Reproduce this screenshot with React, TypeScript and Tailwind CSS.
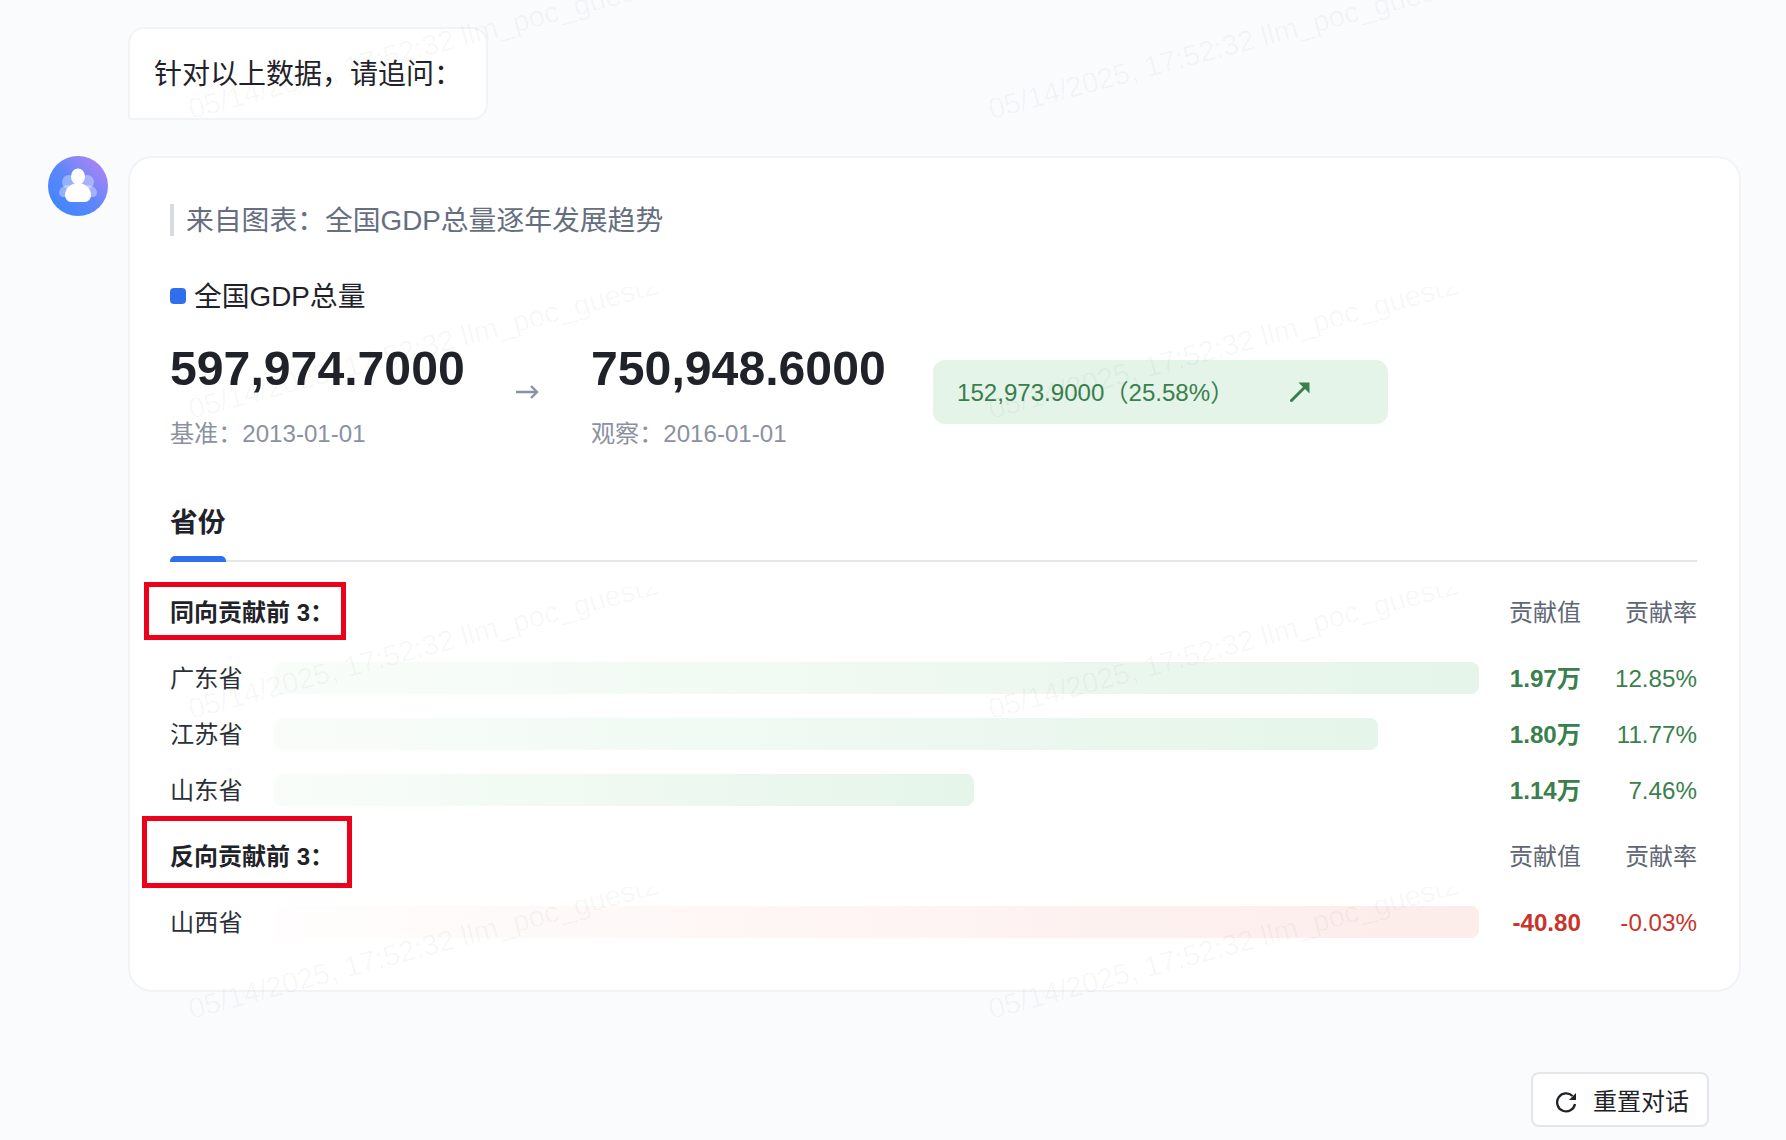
const font = "font-['Liberation_Sans','Noto_Sans_CJK_SC',sans-serif]";

const watermarkTiles = Array.from({ length: 12 }, (_, i) => i);

interface RowData {
  name: string;
  barWidth: string;
  value: string;
  rate: string;
}

const positive: RowData[] = [
  { name: '广东省', barWidth: 'w-full', value: '1.97万', rate: '12.85%' },
  { name: '江苏省', barWidth: 'w-[91.6%]', value: '1.80万', rate: '11.77%' },
  { name: '山东省', barWidth: 'w-[58.1%]', value: '1.14万', rate: '7.46%' },
];

const negative: RowData[] = [{ name: '山西省', barWidth: 'w-full', value: '-40.80', rate: '-0.03%' }];

function Watermark() {
  return (
    <div className="pointer-events-none absolute -left-[140px] -top-[13px] z-10 grid w-[2400px] grid-cols-3">
      {watermarkTiles.map((i) => (
        <div key={i} className="relative h-[300px] w-[800px] overflow-hidden">
          <span className="absolute left-[333px] top-[106px] origin-bottom-left -rotate-[15deg] whitespace-nowrap text-[29px] leading-[32px] text-black/[0.035]">
            05/14/2025, 17:52:32 llm_poc_guest2000
          </span>
        </div>
      ))}
    </div>
  );
}

function Avatar() {
  return (
    <div className="h-[60px] w-[60px] flex-none rounded-full bg-linear-to-tr from-[#2f86ff] via-[#5f86fb] to-[#bb82f3]">
      <svg width="60" height="60" viewBox="0 0 60 60">
        <g fill="#fff" fillOpacity="0.36">
          <circle cx="21" cy="26" r="7" />
          <circle cx="39" cy="26" r="7" />
          <path d="M11 37c0-5 5-8 10-8v12h-6c-2 0-4-2-4-4z" />
          <path d="M49 37c0-5-5-8-10-8v12h6c2 0 4-2 4-4z" />
        </g>
        <ellipse cx="30" cy="20.5" rx="7" ry="8" fill="#fff" />
        <path d="M17 39c0-7 6-12 13-12s13 5 13 12c0 4-3 7-6 7H23c-3 0-6-3-6-7z" fill="#fff" />
      </svg>
    </div>
  );
}

function SectionHead({ title, box }: { title: string; box: string }) {
  return (
    <div className="mt-[34px] flex h-[32px] items-center whitespace-nowrap text-[24px] leading-[32px]">
      <div className="relative flex-1 pt-[2px] font-semibold text-[#1f2329]">
        {title}
        <div className={`absolute border-[5px] border-[#ec001a] ${box}`} />
      </div>
      <div className="w-[72px] pt-[2px] text-right text-[#5f6675]">贡献值</div>
      <div className="ml-[44px] w-[72px] pt-[2px] text-right text-[#5f6675]">贡献率</div>
    </div>
  );
}

function BarRow({ row, negativeRow, first }: { row: RowData; negativeRow?: boolean; first?: boolean }) {
  const tone = negativeRow ? 'text-[#c8342b]' : 'text-[#3a7f4d]';
  const bar = negativeRow ? 'from-[#fffdfd] to-[#fcecea]' : 'from-[#f9fdfa] to-[#e5f5e9]';
  return (
    <div className={`flex h-[32px] items-center text-[24.2px] leading-[32px] ${first ? 'mt-[34px]' : 'mt-[24px]'}`}>
      <div className="w-[104px] flex-none pt-[2px] text-[#2b2f36]">{row.name}</div>
      <div className="w-[1205px] flex-none">
        <div className={`h-[32px] rounded-[8px] bg-linear-to-r ${bar} ${row.barWidth}`} />
      </div>
      <div className={`w-[102px] flex-none pt-[2px] text-right font-bold ${tone}`}>{row.value}</div>
      <div className={`w-[116px] flex-none pt-[2px] text-right ${tone}`}>{row.rate}</div>
    </div>
  );
}

export default function App() {
  return (
    <div className={`relative flex h-[1140px] w-full flex-col overflow-hidden bg-[#fafbfd] pt-[27px] ${font}`}>
      <div className="ml-[128px] flex h-[93px] w-[360px] items-center rounded-[16px] rounded-bl-[3px] border-2 border-[#f2f3f7] bg-white pl-[24px] pt-[2px] text-[28px] text-[#1f2329]">
        针对以上数据，请追问：
      </div>

      <div className="ml-[48px] mt-[36px] flex gap-[20px]">
        <Avatar />
        <div className="w-[1613px] rounded-[24px] border-2 border-[#f2f3f7] bg-white pb-[52px] pl-[40px] pr-[42px] pt-[46px]">
          <div className="h-[32px] border-l-[4px] border-[#d8dbe4] pl-[12px] text-[27.8px] leading-[34px] text-[#666e80]">
            来自图表：全国GDP总量逐年发展趋势
          </div>

          <div className="mt-[44px] flex h-[32px] items-center gap-[8px] text-[27.8px] leading-[32px] text-[#1f2329]">
            <span className="h-[16px] w-[16px] rounded-[4px] bg-[#2f6fed]" />
            <span className="pt-[2px]">全国GDP总量</span>
          </div>

          <div className="mt-[28px] flex items-center">
            <div className="w-[293px] flex-none">
              <div className="h-[56px] whitespace-nowrap text-[48.2px] font-bold leading-[56px] text-[#1f2329]">597,974.7000</div>
              <div className="mt-[21px] h-[32px] whitespace-nowrap text-[24.1px] leading-[34px] text-[#8b91a1]">基准：2013-01-01</div>
            </div>
            <svg className="mb-[5px] ml-[53px] flex-none" width="24" height="14" viewBox="0 0 24 14" fill="none" stroke="#8b92a3" strokeWidth="2.4">
              <path d="M0 7h21M15 1l6 6-6 6" />
            </svg>
            <div className="ml-[51px] w-[293px] flex-none">
              <div className="h-[56px] whitespace-nowrap text-[48.2px] font-bold leading-[56px] text-[#1f2329]">750,948.6000</div>
              <div className="mt-[21px] h-[32px] whitespace-nowrap text-[24.1px] leading-[34px] text-[#8b91a1]">观察：2016-01-01</div>
            </div>
            <div className="mb-[5px] ml-[49px] flex h-[64px] w-[455px] flex-none items-center rounded-[12px] bg-[#e5f4e8] pl-[24px] text-[24.1px] text-[#3a7f4d]">
              <span className="w-[333px] flex-none pt-[2px]">152,973.9000（25.58%）</span>
              <svg width="20" height="20" viewBox="0 0 20 20" fill="#3a7f4d">
                <path d="M1.5 18.5 15 5" stroke="#3a7f4d" strokeWidth="3" strokeLinecap="round" />
                <path d="M8.5.5h11v11z" />
              </svg>
            </div>
          </div>

          <div className="mt-[56px] border-b-2 border-[#e5e6ec]">
            <div className="-mb-[2px] w-[56px] whitespace-nowrap pt-[2px] text-[27.8px] font-semibold leading-[32px] text-[#1f2329]">
              省份
              <div className="mt-[17px] h-[6px] rounded-t-[5px] bg-[#2f6fed]" />
            </div>
          </div>

          <SectionHead title="同向贡献前 3：" box="-left-[26px] -top-[13px] h-[58px] w-[202px]" />
          {positive.map((row, i) => (
            <BarRow key={row.name} row={row} first={i === 0} />
          ))}
          <SectionHead title="反向贡献前 3：" box="-left-[28px] -top-[23px] h-[72px] w-[210px]" />
          {negative.map((row) => (
            <BarRow key={row.name} row={row} negativeRow first />
          ))}
        </div>
      </div>

      <div className="mr-[77px] mt-[80px] flex justify-end">
        <button className="flex h-[55px] w-[178px] items-center gap-[15px] rounded-[8px] border-2 border-[#e4e6ec] bg-white pl-[23px] pt-[5px] text-[24px] text-[#1f2329]">
          <svg width="22" height="22" viewBox="0 0 22 22" fill="none" stroke="#1f2329" strokeWidth="2.3">
            <path d="M19 13A9 9 0 1 1 16.5 5" />
            <path d="M20 2v7h-7z" fill="#1f2329" stroke="none" />
          </svg>
          重置对话
        </button>
      </div>

      <Watermark />
    </div>
  );
}
